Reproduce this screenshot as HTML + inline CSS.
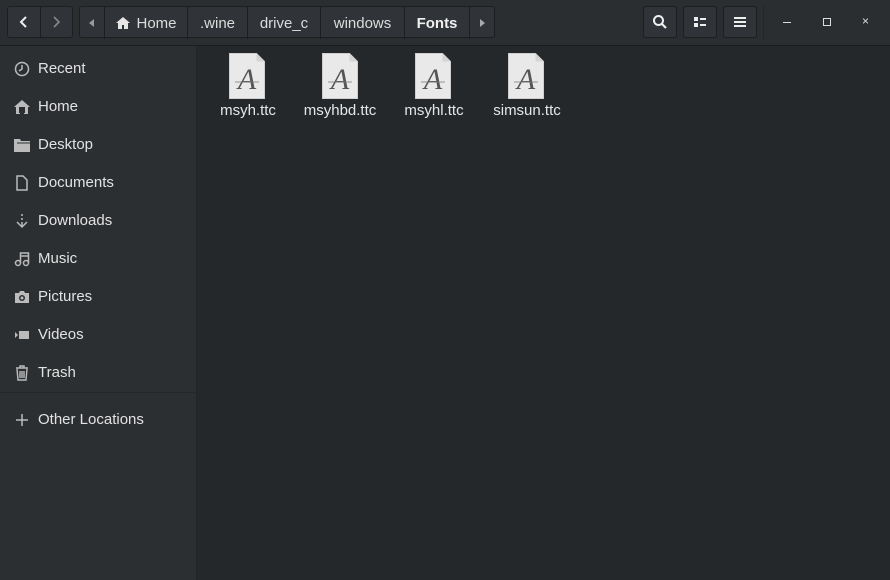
<!DOCTYPE html>
<html><head><style>
body{margin:0;width:890px;height:580px;background:#25282b;font-family:"Liberation Sans","DejaVu Sans",sans-serif;color:#e6e6e6;overflow:hidden;position:relative;font-size:15px}
.hdr{position:absolute;left:0;top:0;width:890px;height:45px;background:#2b2e31;border-bottom:1px solid #1b1d1f}
.btn{position:absolute;top:6px;height:32px;background:#303337;border:1px solid #1c1e20;border-radius:3px;box-sizing:border-box;display:flex;align-items:center;justify-content:center}
.seg{position:absolute;top:7px;height:32px;border-right:1px solid #1c1e20;display:flex;align-items:center;justify-content:center;box-sizing:border-box;color:#dcdcdc;font-size:15px}
.side{position:absolute;left:0;top:46px;width:196px;height:534px;background:#2c2f32;border-right:1px solid #222427}
.it{position:absolute;left:38px;font-size:15px;color:#e2e2e2}
.ic{position:absolute;left:14px;width:16px;height:16px}
.f{position:absolute;top:53px;width:36px;height:46px}
.fl{position:absolute;top:102px;font-size:15px;color:#e6e6e6;text-align:center;width:100px}
</style></head><body>
<div class="hdr">
 <div class="btn" style="left:7px;width:66px;padding:0">
  <div style="width:32px;height:30px;border-right:1px solid #1c1e20;display:flex;align-items:center;justify-content:center"><svg width="12" height="12"><path d="M8 1L3 6l5 5" stroke="#eee" stroke-width="2" fill="none"/></svg></div>
  <div style="width:32px;height:30px;display:flex;align-items:center;justify-content:center"><svg width="12" height="12"><path d="M4 1l5 5-5 5" stroke="#888" stroke-width="1.6" fill="none"/></svg></div>
 </div>
 <div class="btn" style="left:79px;width:416px;top:6px"></div>
 <div class="seg" style="left:80px;width:25px"><svg width="8" height="10"><path d="M6 1L1 5l5 4z" fill="#999"/></svg></div>
 <div class="seg" style="left:105px;width:83px"><svg width="16" height="14" style="margin-right:5px"><path d="M8 1L1 7h2v6h4V9h2v4h4V7h2z" fill="#e6e6e6"/></svg>Home</div>
 <div class="seg" style="left:188px;width:60px">.wine</div>
 <div class="seg" style="left:248px;width:73px">drive_c</div>
 <div class="seg" style="left:321px;width:84px">windows</div>
 <div class="seg" style="left:405px;width:65px;font-weight:bold;color:#f0f0f0">Fonts</div>
 <div class="seg" style="left:470px;width:24px;border:none"><svg width="8" height="10"><path d="M2 1l5 4-5 4z" fill="#aaa"/></svg></div>
 <div class="btn" style="left:643px;width:34px"><svg width="16" height="16"><circle cx="6.5" cy="6.5" r="4.5" stroke="#eee" stroke-width="2" fill="none"/><path d="M10 10l4 4" stroke="#eee" stroke-width="2.2"/></svg></div>
 <div class="btn" style="left:683px;width:34px"><svg width="14" height="12"><rect x="1" y="1" width="4" height="4" fill="#eee"/><rect x="1" y="7" width="4" height="4" fill="#eee"/><rect x="7" y="2" width="6" height="2" fill="#eee"/><rect x="7" y="8" width="6" height="2" fill="#eee"/></svg></div>
 <div class="btn" style="left:723px;width:34px"><svg width="12" height="12"><rect x="0" y="1" width="12" height="2" fill="#eee"/><rect x="0" y="5" width="12" height="2" fill="#eee"/><rect x="0" y="9" width="12" height="2" fill="#eee"/></svg></div>
 <div style="position:absolute;left:763px;top:6px;width:1px;height:34px;background:#232527"></div>
 <div style="position:absolute;left:783px;top:22px;width:8px;height:1px;background:#ddd"></div>
 <div style="position:absolute;left:823px;top:18px;width:6px;height:6px;border:1.5px solid #ddd"></div>
 <div style="position:absolute;left:862px;top:14px;font-size:12px;color:#ddd">×</div>
</div>
<div class="side">
 <svg class="ic" style="top:15px" viewBox="0 0 16 16"><circle cx="8" cy="8" r="6.5" stroke="#bbb" stroke-width="1.5" fill="none"/><path d="M8 4v4l-3 2" stroke="#bbb" stroke-width="1.5" fill="none"/></svg><div class="it" style="top:14px">Recent</div>
 <svg class="ic" style="top:53px" viewBox="0 0 16 16"><path d="M8 1L0 8h2v7h4v-5h4v5h4V8h2z" fill="#bbb"/><rect x="5" y="8" width="6" height="6" fill="#2c2f32"/></svg><div class="it" style="top:52px">Home</div>
 <svg class="ic" style="top:91px" viewBox="0 0 16 16"><path d="M0 2h6l1 2h9v11H0z" fill="#bbb"/><path d="M3 6h13" stroke="#2c2f32"/></svg><div class="it" style="top:90px">Desktop</div>
 <svg class="ic" style="top:129px" viewBox="0 0 16 16"><path d="M3 1h6l4 4v10H3z" stroke="#bbb" stroke-width="1.5" fill="none"/></svg><div class="it" style="top:128px">Documents</div>
 <svg class="ic" style="top:167px" viewBox="0 0 16 16"><path d="M8 1v2M8 5v2M8 9v5M3 9l5 5 5-5" stroke="#bbb" stroke-width="1.5" fill="none"/></svg><div class="it" style="top:166px">Downloads</div>
 <svg class="ic" style="top:205px" viewBox="0 0 16 16"><circle cx="4" cy="12" r="2.5" stroke="#bbb" stroke-width="1.5" fill="none"/><circle cx="12" cy="12" r="2.5" stroke="#bbb" stroke-width="1.5" fill="none"/><path d="M6.5 12V2h8v10M6.5 5h8" stroke="#bbb" stroke-width="1.5" fill="none"/></svg><div class="it" style="top:204px">Music</div>
 <svg class="ic" style="top:243px" viewBox="0 0 16 16"><path d="M1 4h4l1-2h4l1 2h4v10H1z" fill="#bbb"/><circle cx="8" cy="9" r="3" fill="#2c2f32"/><circle cx="8" cy="9" r="1.5" fill="#bbb"/></svg><div class="it" style="top:242px">Pictures</div>
 <svg class="ic" style="top:281px" viewBox="0 0 16 16"><path d="M1 5l3 3-3 3z" fill="#bbb"/><rect x="5" y="4" width="10" height="8" fill="#bbb"/></svg><div class="it" style="top:280px">Videos</div>
 <svg class="ic" style="top:319px" viewBox="0 0 16 16"><path d="M2 3h12M3 4l1 11h8l1-11M6 6v7M8 6v7M10 6v7M6 3V1h4v2" stroke="#bbb" stroke-width="1.4" fill="none"/></svg><div class="it" style="top:318px">Trash</div>
 <div style="position:absolute;left:0;top:346px;width:196px;height:1px;background:#25282b"></div>
 <svg class="ic" style="top:366px" viewBox="0 0 16 16"><path d="M8 2v12M2 8h12" stroke="#bbb" stroke-width="1.5"/></svg><div class="it" style="top:365px">Other Locations</div>
</div>
<svg width="0" height="0" style="position:absolute"><defs><g id="fi"><path d="M0.5 0.5h27l8 8v37H0.5z" fill="#e9e9e9" stroke="#cfcfcf"/><path d="M27.5 0.5v8h8" fill="#d4d4d4"/><text x="18" y="36" font-family="Liberation Serif,serif" font-style="italic" font-size="30" fill="#555" text-anchor="middle">A</text><path d="M6 29h24" stroke="#777" stroke-width="0.7"/></g></defs></svg>
<svg class="f" style="left:229px"><use href="#fi"/></svg><div class="fl" style="left:198px">msyh.ttc</div>
<svg class="f" style="left:322px"><use href="#fi"/></svg><div class="fl" style="left:290px">msyhbd.ttc</div>
<svg class="f" style="left:415px"><use href="#fi"/></svg><div class="fl" style="left:384px">msyhl.ttc</div>
<svg class="f" style="left:508px"><use href="#fi"/></svg><div class="fl" style="left:477px">simsun.ttc</div>
</body></html>
